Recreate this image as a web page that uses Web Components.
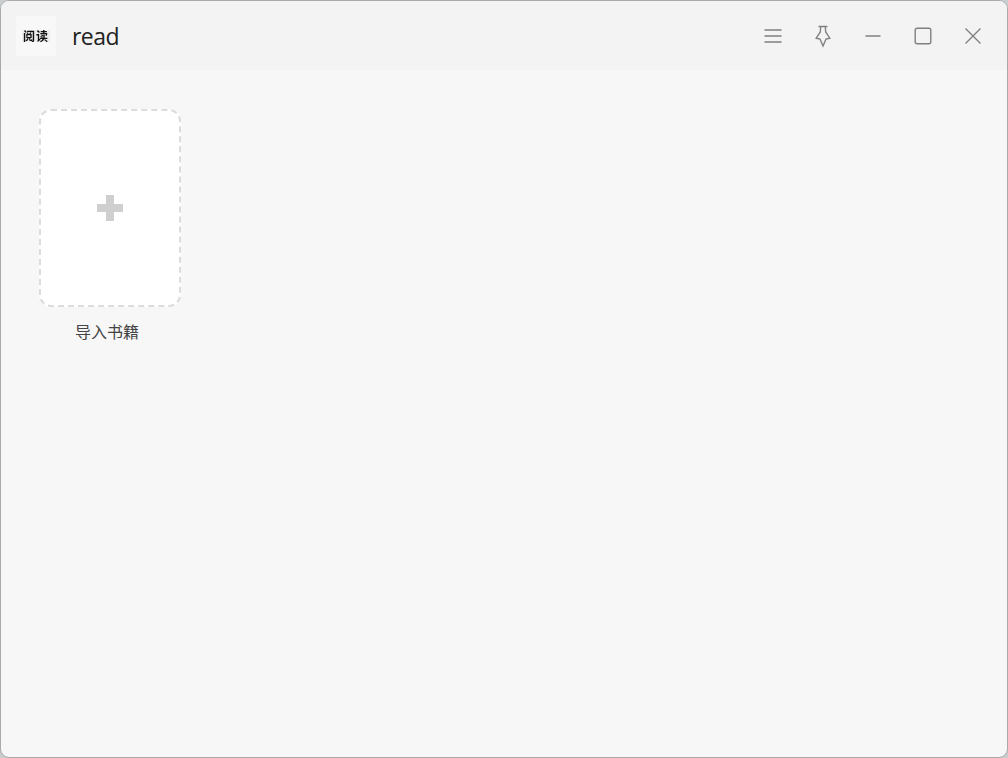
<!DOCTYPE html>
<html lang="zh"><head><meta charset="utf-8"><title>read</title>
<style>
html,body{margin:0;padding:0;height:100%;background:#c9cdd0;overflow:hidden}
body{font-family:"Open Sans","Noto Sans CJK SC",sans-serif}
</style></head><body>
<read-window>
  <title-bar slot="bar" name="read"></title-bar>
  <add-book label="导入书籍"></add-book>
</read-window>
<script>
class ReadWindow extends HTMLElement{constructor(){super();this.attachShadow({mode:'open'}).innerHTML=`<style>
:host{display:flex;flex-direction:column;width:1008px;height:758px;box-sizing:border-box;border:1px solid #a9a9a9;border-radius:9px;overflow:hidden;background:#f7f7f7}
main{flex:1;display:flex;align-items:flex-start;padding:39px 38px}
</style><slot name="bar"></slot><main><slot></slot></main>`}}
class TitleBar extends HTMLElement{constructor(){super();const n=this.getAttribute('name');this.attachShadow({mode:'open'}).innerHTML=`<style>
:host{display:flex;align-items:center;height:69px;flex:none;background:#f3f3f3;padding:0 9px 0 15px}
.logo{width:40px;height:40px;background:#f8f8f8;display:flex;align-items:center;justify-content:center}
.logo span{display:block;background:#ededed;padding:0 1px;font:700 12px/12px "Noto Sans CJK SC",sans-serif;color:#111;letter-spacing:1px;filter:blur(.3px)}
.name{margin-left:16px;font-size:23px;letter-spacing:-.55px;color:#222;line-height:32px;font-family:"Open Sans",sans-serif}
.sp{flex:1}
.b{width:50px;height:40px;display:flex;align-items:center;justify-content:center;padding-top:1px;box-sizing:border-box}
svg{width:20px;height:20px;fill:none;stroke:#808080;stroke-width:1.4;overflow:visible}
</style>
<div class="logo"><span>阅读</span></div><div class="name">${n}</div><div class="sp"></div>
<div class="b"><svg viewBox="0 0 20 20"><path d="M1.500 4h17M1.500 10h17M1.500 16h17"/></svg></div>
<div class="b"><svg viewBox="0 0 20 20"><path d="M5.500 .5h9M7.700 .5 7.300 6 3.200 12.200 7 13 10 20l3-7 3.800-.8L12.700 6 12.300 .5"/></svg></div>
<div class="b"><svg viewBox="0 0 20 20"><path d="M2.500 10h15"/></svg></div>
<div class="b"><svg viewBox="0 0 20 20"><rect x="2.200" y="2.200" width="15.600" height="15.600" rx="2"/></svg></div>
<div class="b"><svg viewBox="0 0 20 20"><path d="M2.500 2.500l15 15M17.500 2.500l-15 15"/></svg></div>`}}
class AddBook extends HTMLElement{constructor(){super();const l=this.getAttribute('label');this.attachShadow({mode:'open'}).innerHTML=`<style>
:host{display:flex;flex-direction:column;width:142px}
.card{box-sizing:border-box;width:142px;height:198px;background:#fff;border:2px dashed #dcdcdc;border-radius:12px;display:flex;align-items:center;justify-content:center}
svg{width:26px;height:26px;fill:#cfcfcf}
.l{margin-top:13px;margin-right:6px;text-align:center;font:16px/22px "Noto Sans CJK SC",sans-serif;color:#444}
</style><div class="card"><svg viewBox="0 0 26 26"><path d="M9 0h8v9h9v8h-9v9H9v-9H0V9h9z"/></svg></div><div class="l">${l}</div>`}}
customElements.define('read-window',ReadWindow);
customElements.define('title-bar',TitleBar);
customElements.define('add-book',AddBook);
</script>
</body></html>
